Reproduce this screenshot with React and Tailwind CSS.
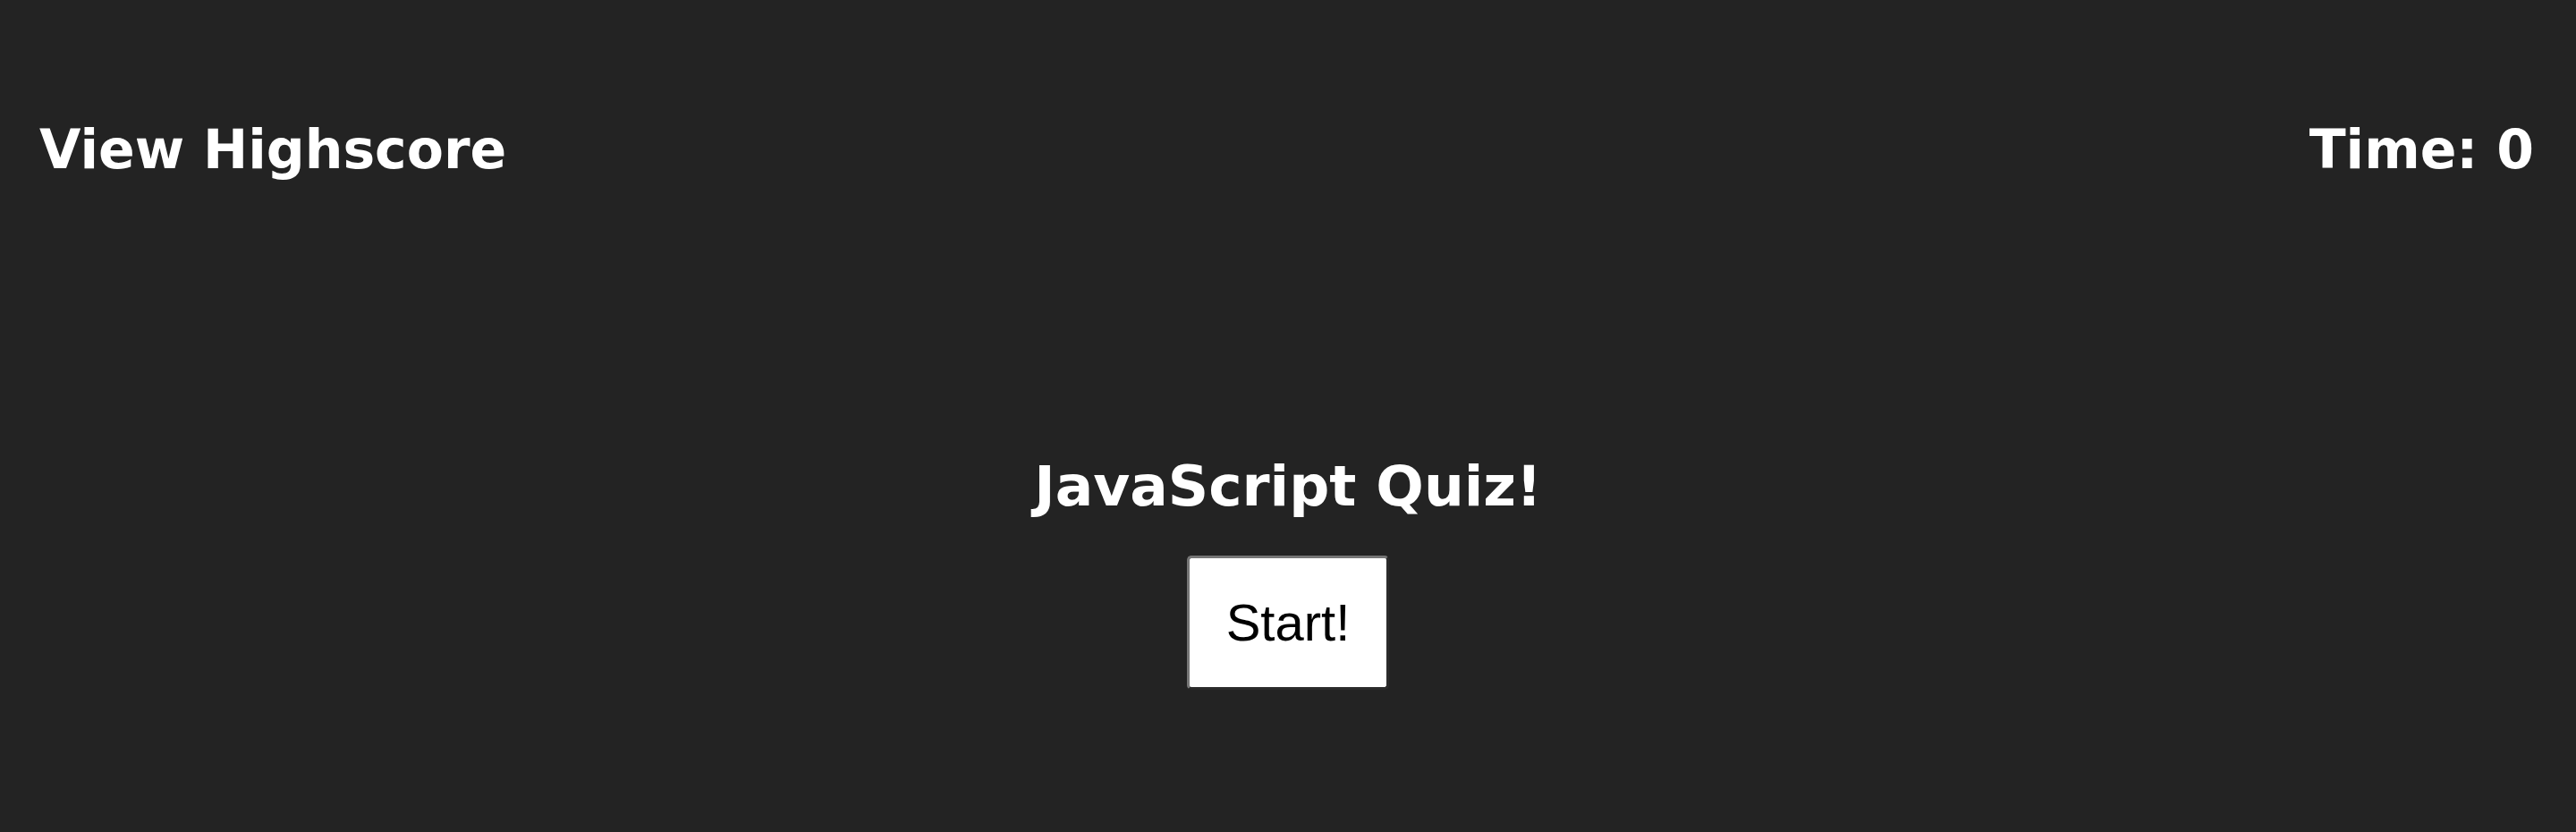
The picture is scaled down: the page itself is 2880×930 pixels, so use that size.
export default function App() {
  return (
    <div className="h-[930px] w-full overflow-hidden bg-[#232323] text-white">
      <header className="flex items-start justify-between pl-[44px] pr-[47px] pt-[132px] font-['DejaVu_Sans',sans-serif] text-[60px] font-bold leading-[70px]">
        <a className="cursor-pointer">View Highscore</a>
        <span>Time: 0</span>
      </header>
      <main className="mt-[307px] flex flex-col items-center">
        <h1 className="font-['DejaVu_Sans',sans-serif] text-[63px] font-bold leading-[70px]">JavaScript Quiz!</h1>
        <button className="mt-[42px] rounded-[5px] border-[3px] border-t-[#767676] border-l-[#767676] border-r-[#2b2b2b] border-b-[#2b2b2b] bg-white px-[41px] py-[38px] font-['Liberation_Sans',Arial,sans-serif] text-[58px] leading-[68px] text-black">
          Start!
        </button>
      </main>
    </div>
  );
}
